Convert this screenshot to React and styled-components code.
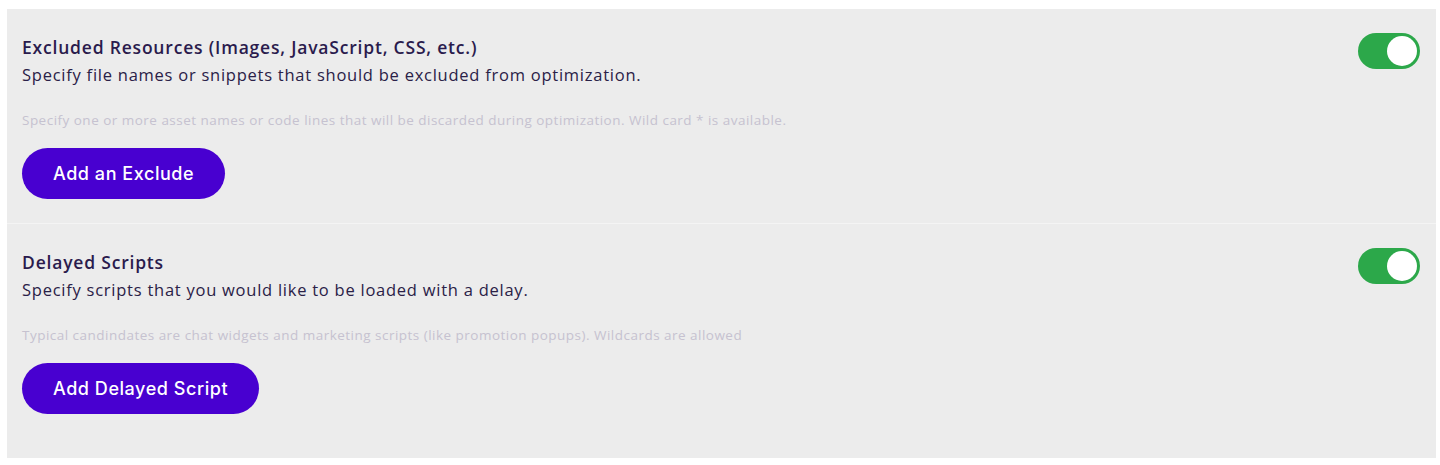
import React, { useState } from "react";
import styled, { createGlobalStyle } from "styled-components";

const Global = createGlobalStyle`
  html, body { margin: 0; padding: 0; background: #ffffff; }
  body { font-family: "Open Sans", "Noto Sans", sans-serif; }
  * { box-sizing: border-box; }
`;

const Page = styled.div`
  padding: 9px 4px 8px 7px;
`;

const Panel = styled.div`
  background: #ececec;
  padding-bottom: 20px;
`;

const Section = styled.section`
  display: flex;
  justify-content: space-between;
  align-items: flex-start;
  padding: 26px 16px 24px 15px;
  & + & {
    border-top: 1px solid #f4f4f4;
  }
`;

const Body = styled.div`
  display: flex;
  flex-direction: column;
`;

const Title = styled.h3`
  margin: 0;
  font-family: "Open Sans", sans-serif;
  font-size: 17.5px;
  font-weight: 600;
  line-height: 24px;
  color: #2a1b4d;
  letter-spacing: 0.8px;
`;

const Description = styled.p`
  margin: 4px 0 0;
  font-family: "Open Sans", sans-serif;
  font-size: 16.5px;
  font-weight: 400;
  line-height: 24px;
  color: #2a2147;
  letter-spacing: 0.75px;
`;

const Hint = styled.p`
  margin: 24px 0 0;
  font-family: "Open Sans", sans-serif;
  font-size: 13.5px;
  line-height: 18px;
  color: #c6c2d0;
  letter-spacing: 0.48px;
`;

const Button = styled.button`
  margin-top: 19px;
  align-self: flex-start;
  height: 51px;
  padding: 0 31px;
  border: none;
  border-radius: 26px;
  background: #4800d0;
  color: #ffffff;
  font-family: "Inter", sans-serif;
  font-size: 18px;
  font-weight: 500;
  letter-spacing: 0.55px;
  cursor: pointer;
`;

const Toggle = styled.button`
  margin-top: -2px;
  flex: none;
  width: 62px;
  height: 36px;
  border-radius: 18px;
  border: none;
  padding: 3px;
  background: ${(p) => (p.$on ? "#2ca84a" : "#c9c9c9")};
  display: flex;
  justify-content: ${(p) => (p.$on ? "flex-end" : "flex-start")};
  cursor: pointer;
`;

const Knob = styled.span`
  width: 30px;
  height: 30px;
  border-radius: 50%;
  background: #ffffff;
`;

const items = [
  {
    title: "Excluded Resources (Images, JavaScript, CSS, etc.)",
    desc: "Specify file names or snippets that should be excluded from optimization.",
    hint: "Specify one or more asset names or code lines that will be discarded during optimization. Wild card * is available.",
    button: "Add an Exclude",
  },
  {
    title: "Delayed Scripts",
    desc: "Specify scripts that you would like to be loaded with a delay.",
    hint: "Typical candindates are chat widgets and marketing scripts (like promotion popups). Wildcards are allowed",
    button: "Add Delayed Script",
  },
];

function Row({ item }) {
  const [on, setOn] = useState(true);
  return (
    <Section>
      <Body>
        <Title>{item.title}</Title>
        <Description>{item.desc}</Description>
        <Hint>{item.hint}</Hint>
        <Button>{item.button}</Button>
      </Body>
      <Toggle $on={on} onClick={() => setOn(!on)} aria-label="toggle">
        <Knob />
      </Toggle>
    </Section>
  );
}

export default function App() {
  return (
    <>
      <Global />
      <Page>
        <Panel>
          {items.map((it) => (
            <Row key={it.title} item={it} />
          ))}
        </Panel>
      </Page>
    </>
  );
}
